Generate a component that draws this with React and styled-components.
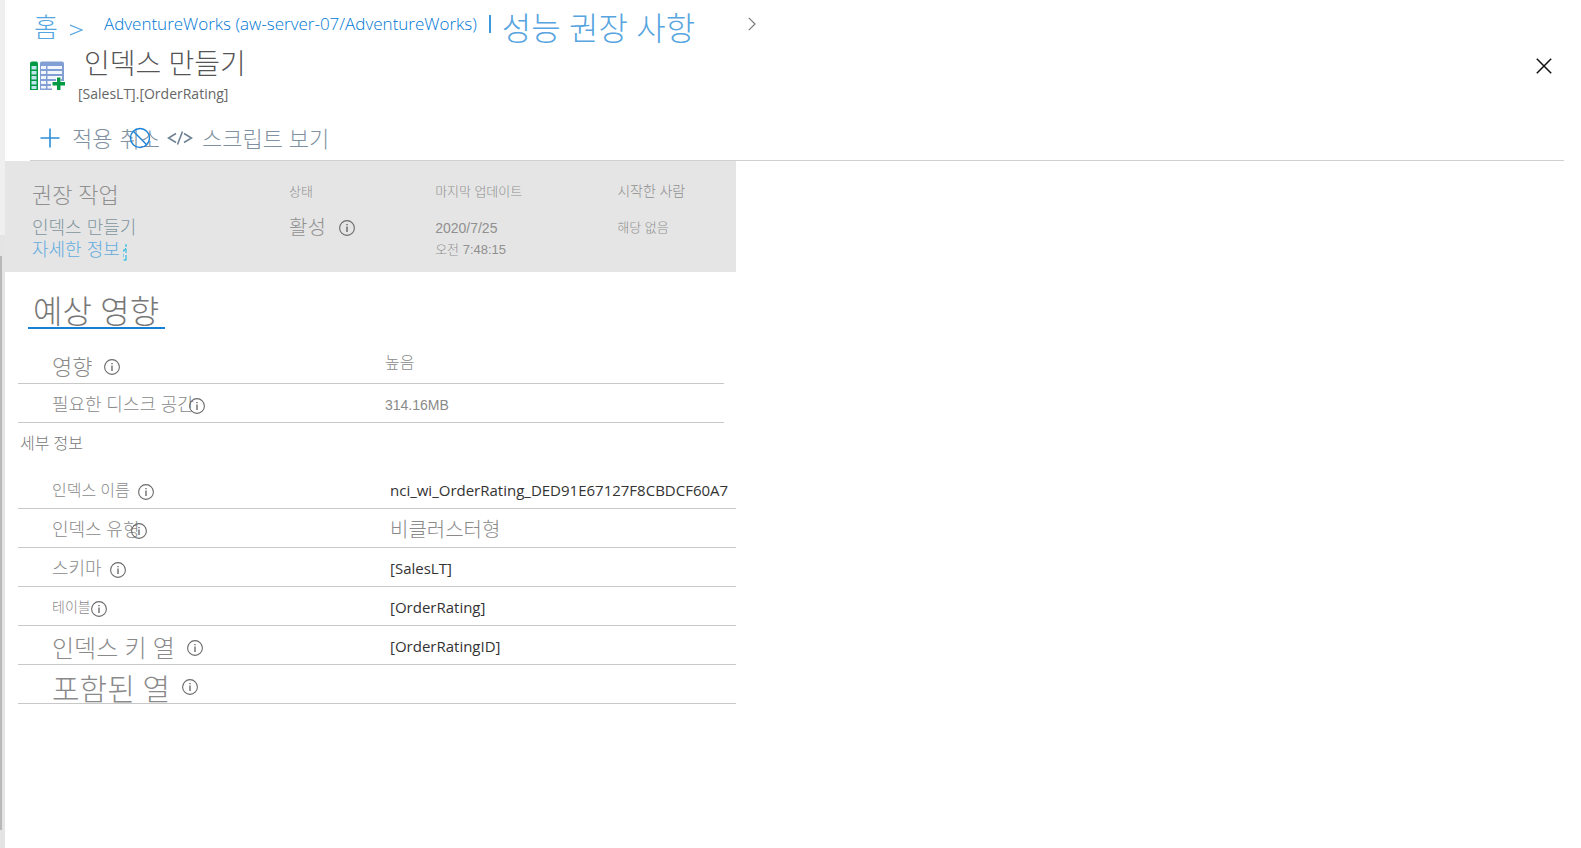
import React from 'react';
import styled, { createGlobalStyle } from 'styled-components';

const GlobalStyle = createGlobalStyle`
  * {
    box-sizing: border-box;
  }
  body {
    margin: 0;
    background: #fff;
    color: #8a8a8a;
    font-family: 'Open Sans', 'Noto Sans CJK KR', sans-serif;
    font-weight: 300;
  }
  h1, h2, h3, p, dl, dd, dt {
    margin: 0;
    font-weight: 300;
  }
  svg {
    display: block;
    flex: none;
  }
`;

const Page = styled.div`
  display: flex;
  min-height: 100vh;
`;

const Rail = styled.div`
  display: flex;
  flex-direction: column;
  flex: none;
  width: 5px;
  padding: 256px 0 18px;
  background: linear-gradient(#efefef 235px, #e4e4e4 235px);
`;

const Thumb = styled.div`
  flex: 1;
  width: 2px;
  background: #b8b8b8;
`;

const Blade = styled.main`
  flex: 1;
  min-width: 0;
`;

const Breadcrumb = styled.nav`
  display: flex;
  align-items: center;
  height: 47px;
  padding-left: 29px;
  white-space: nowrap;
`;

const Crumb = styled.a`
  color: ${p => (p.$strong ? '#0078d4' : '#56a5e0')};
  font-size: ${p => p.$size}px;
  line-height: 47px;
  text-decoration: none;
  padding-top: ${p => (p.$strong ? 0 : 8)}px;
  margin-right: ${p => p.$gap || 0}px;
`;

const Separator = styled.span`
  display: flex;
  padding-top: ${p => p.$top || 0}px;
  margin-right: ${p => p.$gap || 0}px;
`;

const Bar = styled.span`
  width: 2px;
  height: 18px;
  margin: 0 11px 0 12px;
  background: #3d97dc;
`;

const Header = styled.header`
  display: flex;
  align-items: flex-start;
  height: 68px;
  padding: 0 29px 0 25px;
`;

const HeaderIcon = styled.div`
  padding: 14px 13px 0 0;
`;

const Titles = styled.div`
  flex: 1;
`;

const Title = styled.h1`
  padding-left: 6px;
  color: #555;
  font-size: 28px;
  line-height: 32px;
`;

const Subtitle = styled.p`
  color: #666;
  font-size: 14px;
  font-weight: 400;
  line-height: 30px;
`;

const CloseButton = styled.button`
  margin: 11px 0 0;
  padding: 0;
  border: 0;
  background: none;
`;

const Toolbar = styled.div`
  display: flex;
  align-items: center;
  height: 46px;
  margin: 0 17px 0 25px;
  padding-left: 10px;
  border-bottom: 1px solid #d0d0d0;
`;

const ToolButton = styled.button`
  position: relative;
  display: flex;
  align-items: center;
  gap: ${p => p.$gap || 0}px;
  margin-right: 7px;
  padding: 0;
  border: 0;
  background: none;
  color: #8092a2;
  font: inherit;
  font-size: 22px;
  line-height: 32px;
`;

const Overlay = styled.span`
  position: absolute;
  top: 50%;
  left: 50%;
  transform: translate(-50%, -50%);
`;

const Content = styled.div`
  width: 46.4%;
  min-width: 600px;
`;

const Summary = styled.dl`
  display: grid;
  grid-template-columns: 257fr 146fr 182fr 119fr;
  height: 111px;
  padding: 15px 0 0 27px;
  background: #e5e5e5;
  color: #909090;
`;

const Term = styled.dt`
  height: 41px;
  font-size: ${p => p.$size}px;
  line-height: ${p => (p.$lead ? 36 : 30)}px;
  white-space: nowrap;
`;

const Value = styled.dd`
  display: flex;
  align-items: center;
  gap: ${p => p.$gap || 5}px;
  color: ${p => p.$color || 'inherit'};
  font-size: ${p => p.$size}px;
  font-family: 'Liberation Sans', 'Noto Sans CJK KR', sans-serif;
  line-height: 22px;
  white-space: nowrap;
`;

const MoreLink = styled.a`
  display: flex;
  align-items: flex-end;
  gap: 3px;
  color: #62abdf;
  text-decoration: none;
`;

const ImpactHeading = styled.h2`
  display: table;
  margin: 23px 0 16px 23px;
  padding: 0 6px 0 5px;
  border-bottom: 2px solid #1580d6;
  color: #777;
  font-size: 32px;
  line-height: 32px;
`;

const DetailsHeading = styled.h3`
  padding-left: 15px;
  color: #777;
  font-size: 16px;
  line-height: 40px;
  height: 47px;
`;

const PropertyTable = styled.table`
  width: calc(100% - ${p => 13 + (p.$inset || 0)}px);
  margin-left: 13px;
  border-collapse: separate;
  border-spacing: 0;
  table-layout: fixed;
`;

const Row = styled.tr`
  height: 39px;
`;

const LabelCell = styled.th`
  width: ${p => p.$width}px;
  padding: 5px 0 0 34px;
  border-bottom: 1px solid #c8c8c8;
  font-weight: 300;
  text-align: left;
`;

const lineHeightFor = size => {
  if (size < 20) return 30;
  return size < 30 ? 33 : 38;
};

const Label = styled.div`
  display: flex;
  align-items: center;
  height: 33px;
  font-size: ${p => p.$size}px;
  line-height: ${p => lineHeightFor(p.$size)}px;
  white-space: nowrap;
`;

const LabelText = styled.span`
  height: 33px;
`;

const InfoSlot = styled.span`
  margin-left: ${p => p.$gap}px;
`;

const ValueCell = styled.td`
  padding: ${p => (p.$plain ? 1 : 3)}px 0 ${p => (p.$raised ? 8 : 0)}px;
  border-bottom: 1px solid #c8c8c8;
  color: ${p => (p.$plain ? '#333' : '#8a8a8a')};
  font-family: ${p => (p.$metric ? "'Liberation Sans', " : '')}'Open Sans', 'Noto Sans CJK KR', sans-serif;
  font-size: ${p => p.$size}px;
  font-weight: ${p => (p.$plain ? 400 : 300)};
  line-height: ${p => (p.$raised ? 26 : 30)}px;
  white-space: nowrap;
`;

const InfoIcon = () => (
  <svg width="16" height="16" viewBox="0 0 16 16" fill="none" stroke="#6a6a6a">
    <circle cx="8" cy="8" r="7.4" strokeWidth="1.1" />
    <path d="M8 6.5V12M8 4V5.2" stroke="#444" strokeWidth="1.1" />
  </svg>
);

const TableIcon = () => (
  <svg width="35" height="30" viewBox="0 0 35 30">
    <path d="M2 0.5H6Q8 0.5 8 2.5V29H0V2.5Q0 0.5 2 0.5Z" fill="#009a44" />
    <path
      d="M1.5 5H6.5V8.5H1.5ZM1.5 10H6.5V13.5H1.5ZM1.5 15H6.5V18.5H1.5ZM1.5 20H6.5V23.5H1.5ZM1.5 25H6.5V28H1.5Z"
      fill="#c3e6ee"
    />
    <path d="M11.5 0.5H32Q34 0.5 34 2.5V29H10V2.5Q10 0.5 11.5 0.5Z" fill="#829fd5" />
    <path
      d="M11 5H16V8H11ZM17.5 5H32V8H17.5ZM11 10H16V13H11ZM17.5 10H32V13H17.5ZM11 15H16V18H11ZM17.5 15H32V18H17.5ZM11 20H16V23H11ZM17.5 20H32V23H17.5ZM11 25H16V27.5H11ZM17.5 25H32V27.5H17.5Z"
      fill="#f1f5fc"
    />
    <path d="M26 15H31V20H35V30H22V25H21V20H26Z" fill="#fff" />
    <path d="M27 16.5H30.5V21H35V24.5H30.5V29H27V24.5H22.5V21H27Z" fill="#009a44" />
  </svg>
);

const PlusIcon = () => (
  <svg width="20" height="20" viewBox="0 0 20 20" stroke="#2b8fdd" strokeWidth="1.6">
    <path d="M10 0.5V19.5M0.5 10H19.5" />
  </svg>
);

const BlockIcon = () => (
  <svg width="22" height="22" viewBox="0 0 22 22" fill="none" stroke="#1a83d8" strokeWidth="1.4">
    <circle cx="11" cy="11" r="9.5" />
    <path d="M4.3 4.3L17.7 17.7" />
  </svg>
);

const CodeIcon = () => (
  <svg width="26" height="16" viewBox="0 0 26 16" fill="none" stroke="#6f8294" strokeWidth="1.6">
    <path d="M9 3.5L1.5 8L9 12.5M17 3.5L24.5 8L17 12.5" />
    <path d="M15.5 1.5L10.5 14.5" />
  </svg>
);

const ExternalIcon = () => (
  <svg width="4" height="18" viewBox="0 0 4 18" fill="none" stroke="#12b4e0">
    <path d="M0.5 6V16" strokeDasharray="3 2" opacity="0.5" />
    <path d="M3 1V4M3 6V10M3 12V17M0.5 17H3.5M1 8L3 5" />
  </svg>
);

const ChevronIcon = () => (
  <svg width="8" height="14" viewBox="0 0 8 14" fill="none" stroke="#777" strokeWidth="1.2">
    <path d="M0.8 0.8L7 7L0.8 13.2" />
  </svg>
);

const CloseIcon = () => (
  <svg width="16" height="16" viewBox="0 0 16 16" stroke="#111" strokeWidth="1.5">
    <path d="M0.8 0.8L15.2 15.2M15.2 0.8L0.8 15.2" />
  </svg>
);

const ArrowIcon = () => (
  <svg width="13" height="12" viewBox="0 0 13 12" fill="none" stroke="#56a5e0" strokeWidth="1.3">
    <path d="M0 1L12 6L0 11" />
  </svg>
);

const impactRows = [
  { label: '영향', size: 22, gap: 12, value: '높음', valueSize: 16, raised: true },
  { label: '필요한 디스크 공간', size: 18, gap: -5, value: '314.16MB', valueSize: 14, metric: true },
];

const detailRows = [
  { label: '인덱스 이름', size: 16, gap: 8, value: 'nci_wi_OrderRating_DED91E67127F8CBDCF60A7', valueSize: 15, plain: true },
  { label: '인덱스 유형', size: 18, gap: -8, value: '비클러스터형', valueSize: 20 },
  { label: '스키마', size: 18, gap: 8, value: '[SalesLT]', valueSize: 15, plain: true },
  { label: '테이블', size: 14, gap: 0, value: '[OrderRating]', valueSize: 15, plain: true },
  { label: '인덱스 키 열', size: 24, gap: 12, value: '[OrderRatingID]', valueSize: 15, plain: true },
  { label: '포함된 열', size: 30, gap: 12, value: '', valueSize: 15 },
];

const Properties = ({ rows, inset, labelWidth }) => (
  <PropertyTable $inset={inset}>
    <tbody>
      {rows.map(row => (
        <Row key={row.label}>
          <LabelCell scope="row" $width={labelWidth}>
            <Label $size={row.size}>
              <LabelText>{row.label}</LabelText>
              <InfoSlot $gap={row.gap}>
                <InfoIcon />
              </InfoSlot>
            </Label>
          </LabelCell>
          <ValueCell
            $size={row.valueSize}
            $plain={row.plain}
            $metric={row.metric}
            $raised={row.raised}
          >
            {row.value}
          </ValueCell>
        </Row>
      ))}
    </tbody>
  </PropertyTable>
);

const App = () => (
  <Page>
    <GlobalStyle />
    <Rail>
      <Thumb />
    </Rail>
    <Blade>
      <Breadcrumb>
        <Crumb href="#home" $size={26} $gap={12}>
          홈
        </Crumb>
        <Separator $top={12} $gap={21}>
          <ArrowIcon />
        </Separator>
        <Crumb href="#database" $size={17} $strong>
          AdventureWorks (aw-server-07/AdventureWorks)
        </Crumb>
        <Bar />
        <Crumb href="#recommendations" $size={32} $gap={53}>
          성능 권장 사항
        </Crumb>
        <Separator>
          <ChevronIcon />
        </Separator>
      </Breadcrumb>
      <Header>
        <HeaderIcon>
          <TableIcon />
        </HeaderIcon>
        <Titles>
          <Title>인덱스 만들기</Title>
          <Subtitle>[SalesLT].[OrderRating]</Subtitle>
        </Titles>
        <CloseButton type="button" aria-label="닫기">
          <CloseIcon />
        </CloseButton>
      </Header>
      <Toolbar>
        <ToolButton type="button" $gap={12}>
          <PlusIcon />
          적용
        </ToolButton>
        <ToolButton type="button">
          취소
          <Overlay>
            <BlockIcon />
          </Overlay>
        </ToolButton>
        <ToolButton type="button" $gap={9}>
          <CodeIcon />
          스크립트 보기
        </ToolButton>
      </Toolbar>
      <Content>
        <Summary>
          <div>
            <Term $size={22} $lead>
              권장 작업
            </Term>
            <Value $size={18} $color="#7f969e">
              인덱스 만들기
            </Value>
            <Value $size={18}>
              <MoreLink href="#more">
                자세한 정보
                <ExternalIcon />
              </MoreLink>
            </Value>
          </div>
          <div>
            <Term $size={13}>상태</Term>
            <Value $size={20} $gap={13}>
              활성
              <InfoIcon />
            </Value>
          </div>
          <div>
            <Term $size={13}>마지막 업데이트</Term>
            <Value $size={14}>2020/7/25</Value>
            <Value $size={13}>오전 7:48:15</Value>
          </div>
          <div>
            <Term $size={14}>시작한 사람</Term>
            <Value $size={13}>해당 없음</Value>
          </div>
        </Summary>
        <ImpactHeading>예상 영향</ImpactHeading>
        <Properties rows={impactRows} inset={12} labelWidth={367} />
        <DetailsHeading>세부 정보</DetailsHeading>
        <Properties rows={detailRows} labelWidth={372} />
      </Content>
    </Blade>
  </Page>
);

export default App;
